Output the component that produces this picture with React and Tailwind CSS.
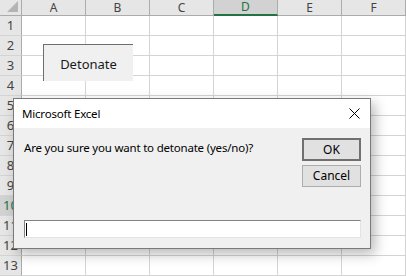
import React from 'react';

const cols = ['A', 'B', 'C', 'D', 'E', 'F'];
const rows = Array.from({ length: 13 }, (_, i) => i + 1);

// Grille façon Excel : 22px d'en-tête de ligne + 6 colonnes de 64px
const Sheet = () => (
  <div className="grid grid-cols-[22px_repeat(6,64px)] grid-rows-[16px_repeat(13,20px)] bg-white">
    <div className="relative bg-[#e6e6e6] border-r border-b border-[#ababab]">
      <div className="absolute right-[3px] bottom-[3px] w-0 h-0 border-l-[11px] border-l-transparent border-b-[11px] border-b-[#b4b4b4]" />
    </div>
    {cols.map((c) => (
      <div
        key={c}
        className={`flex items-center justify-center text-[12px] leading-[12px] border-r border-[#ababab] ${
          c === 'D'
            ? 'bg-[#d2d2d2] text-[#217346] border-b-2 border-b-[#217346]'
            : 'bg-[#e6e6e6] text-[#444] border-b border-b-[#ababab]'
        }`}
      >
        {c}
      </div>
    ))}
    {rows.map((r) => (
      <React.Fragment key={r}>
        <div
          className={`flex items-center justify-center text-[13px] leading-none border-r border-b border-r-[#ababab] border-b-[#d4d4d4] ${
            r === 10 ? 'bg-[#d2d2d2] text-[#217346]' : 'bg-[#e6e6e6] text-[#444]'
          }`}
        >
          {r}
        </div>
        {cols.map((c) => (
          <div key={c} className="border-r border-b border-[#d4d4d4]" />
        ))}
      </React.Fragment>
    ))}
  </div>
);

const App = () => {
  return (
    <div className="relative w-[406px] h-[276px] overflow-hidden font-['Noto_Sans',sans-serif]">
      <Sheet />

      {/* Bouton de la feuille */}
      <div className="absolute left-[43px] top-[44px] w-[90px] h-[37px] flex items-center justify-center pt-[3px] bg-[#f0f0f0] border-t border-l border-[#6e6e6e] text-[13px] text-[#1a1a1a]">
        Detonate
      </div>

      {/* Boîte InputBox */}
      <div className="absolute left-[13px] top-[98px] w-[358px] h-[151px] flex flex-col border border-[#7a7a7a] bg-[#f0f0f0] shadow-[4px_5px_12px_rgba(0,0,0,0.28)]">
        <div className="h-[29px] shrink-0 flex items-center justify-between bg-white pl-[8px] pr-[9px]">
          <span className="text-[11.5px] tracking-[-0.2px] text-black">Microsoft Excel</span>
          <svg width="11" height="11" viewBox="0 0 11 11" className="mr-[1px]">
            <path d="M0.5 0.5 L10.5 10.5 M10.5 0.5 L0.5 10.5" stroke="#000" strokeWidth="1" />
          </svg>
        </div>
        <div className="flex-1 flex flex-col pt-[10px] pl-[10px] pr-[9px] pb-[10px]">
          <div className="flex justify-between">
            <p className="text-[11.5px] tracking-[-0.2px] text-black mt-[1px]">Are you sure you want to detonate (yes/no)?</p>
            <div className="flex flex-col gap-[4px]">
              <button className="w-[59px] h-[23px] bg-[#e1e1e1] border-2 border-[#707070] text-[12px] text-black leading-none">
                OK
              </button>
              <button className="w-[59px] h-[22px] bg-[#e1e1e1] border border-[#adadad] text-[12px] text-black leading-none">
                Cancel
              </button>
            </div>
          </div>
          <div className="mt-auto h-[18px] bg-white border-t border-l border-[#828282] border-r border-b border-r-[#e3e3e3] border-b-[#e3e3e3] flex items-center pl-[1px]">
            <div className="w-px h-[13px] bg-black" />
          </div>
        </div>
      </div>
    </div>
  );
};

export default App;
